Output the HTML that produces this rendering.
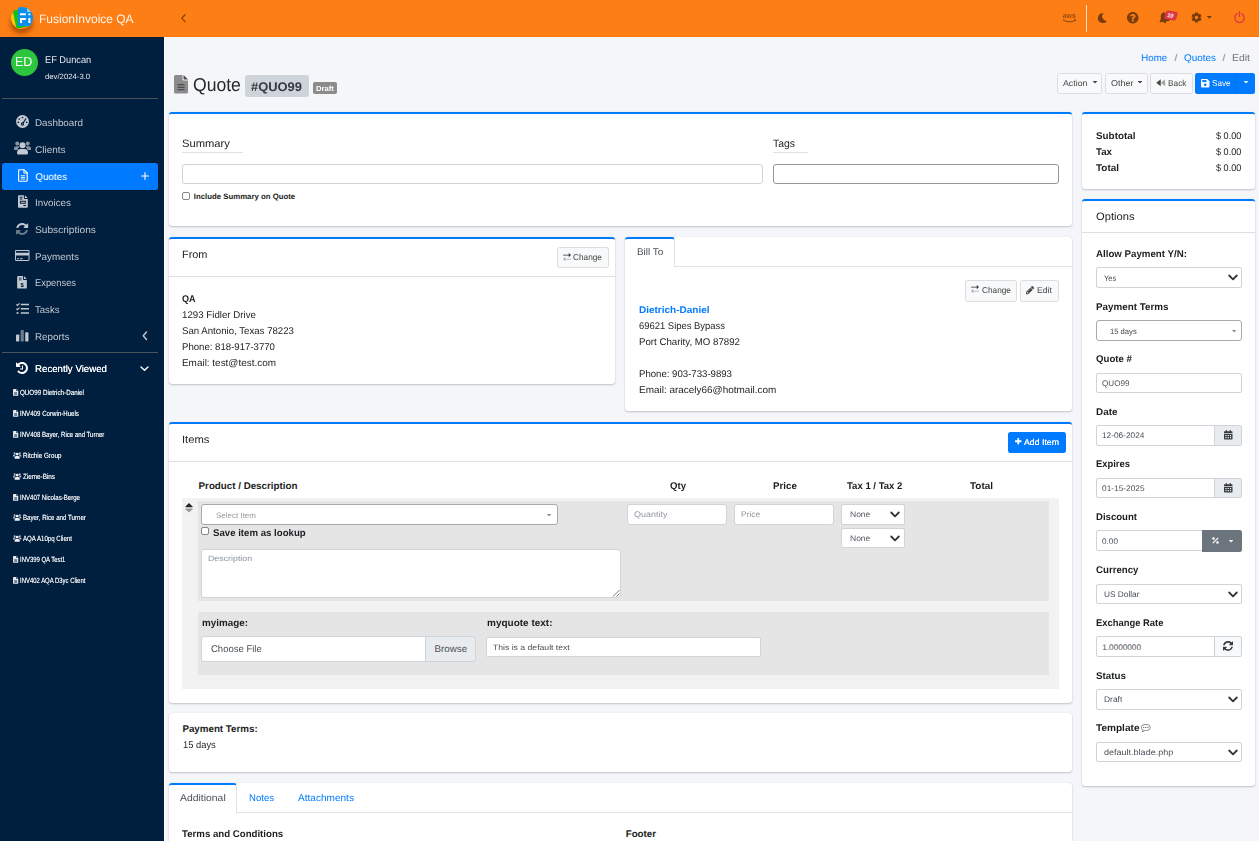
<!DOCTYPE html><html lang="en"><head><meta charset="utf-8"><title>FusionInvoice QA - Quote #QUO99</title><style>html,body{margin:0;padding:0}body{width:1259px;height:841px;overflow:hidden;position:relative;background:#f4f6f9;font-family:"Liberation Sans",sans-serif;text-rendering:geometricPrecision}
.a{position:absolute;box-sizing:border-box}.t{position:absolute;white-space:nowrap;line-height:1;transform-origin:0 50%}svg{display:block;overflow:visible}.w{position:absolute;left:0;top:0;width:0;height:0;margin:0;padding:0}</style></head><body>
<main class="w">
<div class="a" style="left:164px;top:37px;width:1095px;height:804px;background:#f4f6f9;"></div>
<div class="a" style="left:164px;top:37px;width:1px;height:804px;background:#fff;"></div>
<span class="t" style="left:1141.00px;top:54.031px;font-size:9.77px;color:#007bff;">Home</span>
<span class="t" style="left:1174.50px;top:54.031px;font-size:9.77px;color:#6c757d;">/</span>
<span class="t" style="left:1184.00px;top:54.031px;font-size:9.77px;color:#007bff;transform:scaleX(1.0156);">Quotes</span>
<span class="t" style="left:1222.50px;top:54.031px;font-size:9.77px;color:#6c757d;">/</span>
<span class="t" style="left:1232.00px;top:54.031px;font-size:9.77px;color:#6c757d;transform:scaleX(1.0680);">Edit</span>
<svg class="a" style="left:174.00px;top:74.50px;" width="14.00" height="18.50" viewBox="0 0 28 37"><path d="M3 0H17V8.5Q17 11 19.5 11H28V34Q28 37 25 37H3Q0 37 0 34V3Q0 0 3 0Z" fill="#8c8c8c"/><path d="M19 0L28 9H20.5Q19 9 19 7.5Z" fill="#4a4a4a"/><path d="M7 19.5h14M7 24.5h14M7 29.5h14" stroke="#3c3c3c" stroke-width="2.2"/></svg>
<span class="t" style="left:192.90px;top:76.034px;font-size:18.70px;color:#24282c;transform:scaleX(0.9400);">Quote</span>
<div class="a" style="left:245px;top:75px;width:64px;height:22px;background:#ced4da;border-radius:3px;"></div>
<span class="t" style="left:251.20px;top:81.026px;font-size:12.60px;color:#343a40;font-weight:700;transform:scaleX(1.0260);">#QUO99</span>
<div class="a" style="left:313px;top:82px;width:24px;height:12px;background:#8c8c8c;border-radius:2px;"></div>
<span class="t" style="left:315.70px;top:85.035px;font-size:7.44px;color:#fff;font-weight:700;transform:scaleX(1.0304);">Draft</span>
<div class="a" style="left:1057px;top:73px;width:45px;height:21px;background:#f8f9fa;border:1px solid #ddd;border-radius:2.5px;"></div>
<span class="t" style="left:1063.00px;top:79.024px;font-size:8.56px;color:#444;transform:scaleX(1.0296);">Action</span>
<svg class="a" style="left:1092.50px;top:81.00px;" width="4.00" height="2.40" viewBox="0 0 256 144" preserveAspectRatio="none"><path fill="#444" d="M256 16C256 7 249 0 240 0H16C7 0 0 7 0 16C0 20 2 24 5 27L117 139C120 142 124 144 128 144C132 144 136 142 139 139L251 27C254 24 256 20 256 16Z"/></svg>
<div class="a" style="left:1105px;top:73px;width:43px;height:21px;background:#f8f9fa;border:1px solid #ddd;border-radius:2.5px;"></div>
<span class="t" style="left:1111.00px;top:79.024px;font-size:8.56px;color:#444;transform:scaleX(1.0514);">Other</span>
<svg class="a" style="left:1138.00px;top:81.00px;" width="4.00" height="2.40" viewBox="0 0 256 144" preserveAspectRatio="none"><path fill="#444" d="M256 16C256 7 249 0 240 0H16C7 0 0 7 0 16C0 20 2 24 5 27L117 139C120 142 124 144 128 144C132 144 136 142 139 139L251 27C254 24 256 20 256 16Z"/></svg>
<div class="a" style="left:1150px;top:73px;width:43px;height:21px;background:#f8f9fa;border:1px solid #ddd;border-radius:2.5px;"></div>
<svg class="a" style="left:1156.00px;top:78.80px;" width="9.50" height="7.40" viewBox="0 0 19 15"><path d="M9.500 0.500V14.500L0.500 7.500Z" fill="#444"/><path d="M18.500 0.500V14.500L9.500 7.500Z" fill="#a5a5a5"/></svg>
<span class="t" style="left:1167.50px;top:79.024px;font-size:8.56px;color:#444;transform:scaleX(0.9692);">Back</span>
<div class="a" style="left:1195px;top:73px;width:60px;height:21px;background:#007bff;border-radius:2.5px;"></div>
<div class="a" style="left:1236px;top:73px;width:0.6px;height:21px;background:#0574f0;"></div>
<svg class="a" style="left:1201.00px;top:78.50px;" width="8.50" height="8.50" viewBox="0 0 17 17"><path d="M2 0H12.5L17 4.5V15Q17 17 15 17H2Q0 17 0 15V2Q0 0 2 0Z" fill="#fff"/><rect x="2.5" y="2.2" width="8.5" height="4" fill="#007bff"/><circle cx="8.5" cy="11.5" r="2.6" fill="#007bff"/></svg>
<span class="t" style="left:1212.00px;top:79.024px;font-size:8.56px;color:#fff;transform:scaleX(0.9479);">Save</span>
<svg class="a" style="left:1243.50px;top:81.00px;" width="4.00" height="2.40" viewBox="0 0 256 144" preserveAspectRatio="none"><path fill="#fff" d="M256 16C256 7 249 0 240 0H16C7 0 0 7 0 16C0 20 2 24 5 27L117 139C120 142 124 144 128 144C132 144 136 142 139 139L251 27C254 24 256 20 256 16Z"/></svg>
<div class="a" style="left:169px;top:112px;width:903px;height:114px;background:#fff;border-radius:3px;box-shadow:0 0 1px rgba(0,0,0,.125),0 1px 2px rgba(0,0,0,.2);border-top:2px solid #007bff;"></div>
<span class="t" style="left:182.00px;top:139.025px;font-size:10.70px;color:#1b1e21;transform:scaleX(1.0481);">Summary</span>
<div class="a" style="left:182px;top:152px;width:61px;height:1px;background:#dee2e6;"></div>
<div class="a" style="left:182px;top:164px;width:581px;height:20px;background:#fff;border:1px solid #ced4da;border-radius:3px;"></div>
<div class="a" style="left:182px;top:192px;width:8px;height:8px;background:#fff;border:1px solid #858585;border-radius:2px;"></div>
<span class="t" style="left:193.80px;top:193.034px;font-size:7.81px;color:#1b1e21;font-weight:700;">Include Summary on Quote</span>
<span class="t" style="left:773.00px;top:139.025px;font-size:10.70px;color:#1b1e21;transform:scaleX(0.9744);">Tags</span>
<div class="a" style="left:773px;top:152px;width:35px;height:1px;background:#dee2e6;"></div>
<div class="a" style="left:773px;top:164px;width:286px;height:20px;background:#fff;border:1px solid #959595;border-radius:3px;"></div>
<div class="a" style="left:1082px;top:112px;width:173px;height:77px;background:#fff;border-radius:3px;box-shadow:0 0 1px rgba(0,0,0,.125),0 1px 2px rgba(0,0,0,.2);border-top:2px solid #007bff;"></div>
<span class="t" style="left:1096.00px;top:132.031px;font-size:9.77px;color:#1b1e21;font-weight:700;transform:scaleX(1.0107);">Subtotal</span>
<span class="t" style="left:1216.20px;top:132.031px;font-size:9.77px;color:#1b1e21;transform:scaleX(0.9315);">$ 0.00</span>
<span class="t" style="left:1096.00px;top:148.031px;font-size:9.77px;color:#1b1e21;font-weight:700;transform:scaleX(0.9925);">Tax</span>
<span class="t" style="left:1216.20px;top:148.031px;font-size:9.77px;color:#1b1e21;transform:scaleX(0.9315);">$ 0.00</span>
<span class="t" style="left:1096.00px;top:164.031px;font-size:9.77px;color:#1b1e21;font-weight:700;transform:scaleX(1.0169);">Total</span>
<span class="t" style="left:1216.20px;top:164.031px;font-size:9.77px;color:#1b1e21;transform:scaleX(0.9315);">$ 0.00</span>
<div class="a" style="left:169px;top:237px;width:446px;height:147px;background:#fff;border-radius:3px;box-shadow:0 0 1px rgba(0,0,0,.125),0 1px 2px rgba(0,0,0,.2);border-top:2px solid #007bff;"></div>
<span class="t" style="left:182.00px;top:250.025px;font-size:10.70px;color:#1b1e21;transform:scaleX(1.0206);">From</span>
<div class="a" style="left:169px;top:276px;width:446px;height:1px;background:rgba(0,0,0,.125);"></div>
<div class="a" style="left:557px;top:247px;width:52px;height:21px;background:#f8f9fa;border:1px solid #ddd;border-radius:2.5px;"></div>
<svg class="a" style="left:563.00px;top:252.50px;" width="8.00" height="8.20" viewBox="0 0 16 16.400"><path d="M0 3.300H11.500V0L16 4.200L11.500 8.400V5.100H0Z" fill="#333"/><path d="M16 11.300H4.500V8L0 12.200L4.500 16.400V13.100H16Z" fill="#a9a9b8"/></svg>
<span class="t" style="left:573.00px;top:253.024px;font-size:8.56px;color:#444;transform:scaleX(0.9666);">Change</span>
<span class="t" style="left:182.20px;top:295.031px;font-size:9.77px;color:#1b1e21;font-weight:700;transform:scaleX(0.9280);">QA</span>
<span class="t" style="left:182.30px;top:311.031px;font-size:9.77px;color:#1b1e21;transform:scaleX(0.9946);">1293 Fidler Drive</span>
<span class="t" style="left:182.30px;top:327.031px;font-size:9.77px;color:#1b1e21;transform:scaleX(0.9882);">San Antonio, Texas 78223</span>
<span class="t" style="left:182.30px;top:343.031px;font-size:9.77px;color:#1b1e21;transform:scaleX(0.9839);">Phone: 818-917-3770</span>
<span class="t" style="left:182.30px;top:359.031px;font-size:9.77px;color:#1b1e21;transform:scaleX(1.0170);">Email: test@test.com</span>
<div class="a" style="left:625px;top:237px;width:447px;height:174px;background:#fff;border-radius:3px;box-shadow:0 0 1px rgba(0,0,0,.125),0 1px 2px rgba(0,0,0,.2);"></div>
<div class="a" style="left:625px;top:265.6px;width:447px;height:0.8px;background:#dee2e6;"></div>
<div class="a" style="left:625px;top:237px;width:49.5px;height:30px;background:#fff;border-top:2px solid #007bff;border-right:1px solid #dee2e6;border-radius:3px 3px 0 0;"></div>
<span class="t" style="left:636.50px;top:248.031px;font-size:9.77px;color:#495057;transform:scaleX(1.0158);">Bill To</span>
<div class="a" style="left:965px;top:280px;width:51.5px;height:22px;background:#f8f9fa;border:1px solid #ddd;border-radius:2.5px;"></div>
<svg class="a" style="left:971.00px;top:285.40px;" width="8.00" height="8.20" viewBox="0 0 16 16.400"><path d="M0 3.300H11.500V0L16 4.200L11.500 8.400V5.100H0Z" fill="#333"/><path d="M16 11.300H4.500V8L0 12.200L4.500 16.400V13.100H16Z" fill="#a9a9b8"/></svg>
<span class="t" style="left:981.50px;top:286.024px;font-size:8.56px;color:#444;transform:scaleX(0.9666);">Change</span>
<div class="a" style="left:1020px;top:280px;width:39px;height:22px;background:#f8f9fa;border:1px solid #ddd;border-radius:2.5px;"></div>
<svg class="a" style="left:1026.00px;top:285.60px;" width="8.20" height="8.20" viewBox="0 0 379 379" preserveAspectRatio="none"><path fill="#444" d="M91 347H64V315H32V288L55 265L114 324ZM222 115C222 116 221 118 220 119L84 254C83 256 82 256 80 256C77 256 74 254 74 251C74 249 75 248 76 246L212 111C213 110 214 109 216 109C219 109 222 112 222 115ZM208 67 0 275V379H104L312 171ZM379 91C379 82 375 74 370 68L311 10C305 4 296 0 288 0C280 0 271 4 266 10L224 51L328 155L370 113C375 108 379 99 379 91Z"/></svg>
<span class="t" style="left:1037.00px;top:286.024px;font-size:8.56px;color:#444;transform:scaleX(1.0158);">Edit</span>
<span class="t" style="left:639.20px;top:306.031px;font-size:9.77px;color:#007bff;font-weight:700;transform:scaleX(1.0228);">Dietrich-Daniel</span>
<span class="t" style="left:639.20px;top:322.031px;font-size:9.77px;color:#1b1e21;transform:scaleX(0.9657);">69621 Sipes Bypass</span>
<span class="t" style="left:639.20px;top:338.031px;font-size:9.77px;color:#1b1e21;transform:scaleX(0.9912);">Port Charity, MO 87892</span>
<span class="t" style="left:639.20px;top:370.031px;font-size:9.77px;color:#1b1e21;transform:scaleX(0.9839);">Phone: 903-733-9893</span>
<span class="t" style="left:639.20px;top:386.031px;font-size:9.77px;color:#1b1e21;transform:scaleX(1.0198);">Email: aracely66@hotmail.com</span>
<div class="a" style="left:169px;top:422px;width:903px;height:281px;background:#fff;border-radius:3px;box-shadow:0 0 1px rgba(0,0,0,.125),0 1px 2px rgba(0,0,0,.2);border-top:2px solid #007bff;"></div>
<span class="t" style="left:182.00px;top:435.025px;font-size:10.70px;color:#1b1e21;transform:scaleX(1.0512);">Items</span>
<div class="a" style="left:169px;top:461px;width:903px;height:1px;background:rgba(0,0,0,.125);"></div>
<div class="a" style="left:1008px;top:432px;width:58px;height:21px;background:#007bff;border-radius:2.5px;"></div>
<svg class="a" style="left:1014.80px;top:438.20px;" width="6.50" height="6.50" viewBox="0 0 352 352" preserveAspectRatio="none"><path fill="#fff" d="M352 152C352 139 341 128 328 128H224V24C224 11 213 0 200 0H152C139 0 128 11 128 24V128H24C11 128 0 139 0 152V200C0 213 11 224 24 224H128V328C128 341 139 352 152 352H200C213 352 224 341 224 328V224H328C341 224 352 213 352 200Z"/></svg>
<span class="t" style="left:1024.00px;top:438.024px;font-size:8.56px;color:#fff;transform:scaleX(1.0222);text-shadow:0 0 .4px #fff;">Add Item</span>
<span class="t" style="left:198.60px;top:482.031px;font-size:9.77px;color:#1b1e21;font-weight:700;">Product / Description</span>
<span class="t" style="left:669.50px;top:482.031px;font-size:9.77px;color:#1b1e21;font-weight:700;transform:scaleX(0.9836);">Qty</span>
<span class="t" style="left:773.00px;top:482.031px;font-size:9.77px;color:#1b1e21;font-weight:700;transform:scaleX(1.0047);">Price</span>
<span class="t" style="left:847.10px;top:482.031px;font-size:9.77px;color:#1b1e21;font-weight:700;transform:scaleX(0.9777);">Tax 1 / Tax 2</span>
<span class="t" style="left:969.90px;top:482.031px;font-size:9.77px;color:#1b1e21;font-weight:700;transform:scaleX(1.0169);">Total</span>
<div class="a" style="left:182px;top:498px;width:877px;height:191px;background:#f2f2f2;"></div>
<div class="a" style="left:198px;top:501px;width:851px;height:100px;background:#e5e5e5;"></div>
<div class="a" style="left:198px;top:612px;width:851px;height:63px;background:#e5e5e5;"></div>
<svg class="a" style="left:184.50px;top:503.00px;" width="8.00" height="9.60" viewBox="0 0 16 20"><path d="M8 0L15.4 7.2Q16 8.6 14.6 8.6H1.4Q0 8.6 .6 7.2Z" fill="#212529"/><path d="M8 20L15.4 12.8Q16 11.4 14.6 11.4H1.4Q0 11.4 .6 12.8Z" fill="#999"/></svg>
<div class="a" style="left:201px;top:504px;width:357px;height:21px;background:#fff;border:1px solid #aaa;border-radius:3px;"></div>
<span class="t" style="left:216.00px;top:512.034px;font-size:7.81px;color:#999;transform:scaleX(1.0243);">Select Item</span>
<svg class="a" style="left:547.20px;top:513.50px;" width="4.20" height="2.60" viewBox="0 0 10 6"><path d="M0 0H10L5 6Z" fill="#888"/></svg>
<div class="a" style="left:201.3px;top:527px;width:8px;height:8px;background:#fff;border:1px solid #858585;border-radius:2px;"></div>
<span class="t" style="left:212.70px;top:529.031px;font-size:9.77px;color:#1b1e21;font-weight:700;transform:scaleX(0.9868);">Save item as lookup</span>
<div class="a" style="left:201px;top:549px;width:420px;height:49px;background:#fff;border:1px solid #ced4da;border-radius:3px;"></div>
<span class="t" style="left:208.00px;top:555.034px;font-size:7.81px;color:#8a94a0;transform:scaleX(1.1319);">Description</span>
<svg class="a" style="left:611.50px;top:588.50px;" width="8.00" height="8.00" viewBox="0 0 8 8"><path d="M1 7.5L7.5 1M4.5 7.5L7.5 4.5" stroke="#555" stroke-width=".8" fill="none"/></svg>
<div class="a" style="left:627px;top:504px;width:100px;height:21px;background:#fff;border:1px solid #ced4da;border-radius:3px;"></div>
<span class="t" style="left:633.60px;top:511.033px;font-size:8.18px;color:#90979f;transform:scaleX(1.1027);">Quantity</span>
<div class="a" style="left:734px;top:504px;width:100px;height:21px;background:#fff;border:1px solid #ced4da;border-radius:3px;"></div>
<span class="t" style="left:740.70px;top:511.033px;font-size:8.18px;color:#90979f;transform:scaleX(1.0348);">Price</span>
<div class="a" style="left:841px;top:504px;width:64px;height:21px;background:#fff;border:1px solid #ced4da;border-radius:2px;"></div>
<span class="t" style="left:849.60px;top:511.033px;font-size:8.18px;color:#50565c;transform:scaleX(1.0384);">None</span>
<svg class="a" style="left:889.50px;top:511.20px;" width="10.00" height="7.00" viewBox="0 0 10 7"><path d="M1.2 1.5L5 5.3L8.8 1.5" stroke="#333" stroke-width="1.8" fill="none" stroke-linecap="round" stroke-linejoin="round"/></svg>
<div class="a" style="left:841px;top:528px;width:64px;height:20px;background:#fff;border:1px solid #ced4da;border-radius:2px;"></div>
<span class="t" style="left:849.60px;top:535.033px;font-size:8.18px;color:#50565c;transform:scaleX(1.0384);">None</span>
<svg class="a" style="left:889.50px;top:535.20px;" width="10.00" height="7.00" viewBox="0 0 10 7"><path d="M1.2 1.5L5 5.3L8.8 1.5" stroke="#333" stroke-width="1.8" fill="none" stroke-linecap="round" stroke-linejoin="round"/></svg>
<span class="t" style="left:201.80px;top:619.031px;font-size:9.77px;color:#1b1e21;font-weight:700;transform:scaleX(1.0082);">myimage:</span>
<div class="a" style="left:201px;top:636px;width:275px;height:26px;background:#fff;border:1px solid #ced4da;border-radius:3px;"></div>
<div class="a" style="left:425px;top:636px;width:51px;height:26px;background:#e9ecef;border:1px solid #ced4da;border-radius:0 3px 3px 0;"></div>
<span class="t" style="left:210.70px;top:645.031px;font-size:9.77px;color:#495057;transform:scaleX(0.9727);">Choose File</span>
<span class="t" style="left:434.60px;top:645.031px;font-size:9.77px;color:#495057;">Browse</span>
<span class="t" style="left:486.70px;top:619.031px;font-size:9.77px;color:#1b1e21;font-weight:700;transform:scaleX(1.0228);">myquote text:</span>
<div class="a" style="left:486px;top:637px;width:275px;height:20px;background:#fff;border:1px solid #ced4da;border-radius:2px;"></div>
<span class="t" style="left:493.10px;top:644.034px;font-size:7.81px;color:#495057;transform:scaleX(1.1070);">This is a default text</span>
<div class="a" style="left:169px;top:713px;width:903px;height:59px;background:#fff;border-radius:3px;box-shadow:0 0 1px rgba(0,0,0,.125),0 1px 2px rgba(0,0,0,.2);"></div>
<span class="t" style="left:182.40px;top:725.031px;font-size:9.77px;color:#1b1e21;font-weight:700;">Payment Terms:</span>
<span class="t" style="left:182.60px;top:741.031px;font-size:9.77px;color:#1b1e21;transform:scaleX(0.9578);">15 days</span>
<div class="a" style="left:169px;top:783px;width:903px;height:77px;background:#fff;border-radius:3px;box-shadow:0 0 1px rgba(0,0,0,.125),0 1px 2px rgba(0,0,0,.2);"></div>
<div class="a" style="left:169px;top:811.6px;width:903px;height:0.8px;background:#dee2e6;"></div>
<div class="a" style="left:169px;top:783px;width:68px;height:30px;background:#fff;border-top:2px solid #007bff;border-right:1px solid #dee2e6;border-radius:3px 3px 0 0;"></div>
<span class="t" style="left:179.60px;top:794.031px;font-size:9.77px;color:#495057;transform:scaleX(1.0655);">Additional</span>
<span class="t" style="left:249.40px;top:794.031px;font-size:9.77px;color:#007bff;transform:scaleX(0.9804);">Notes</span>
<span class="t" style="left:298.00px;top:794.031px;font-size:9.77px;color:#007bff;transform:scaleX(1.0309);">Attachments</span>
<span class="t" style="left:182.40px;top:830.031px;font-size:9.77px;color:#1b1e21;font-weight:700;transform:scaleX(0.9884);">Terms and Conditions</span>
<span class="t" style="left:625.70px;top:830.031px;font-size:9.77px;color:#1b1e21;font-weight:700;">Footer</span>
<section class="w">
<div class="a" style="left:1082px;top:199px;width:173px;height:587px;background:#fff;border-radius:3px;box-shadow:0 0 1px rgba(0,0,0,.125),0 1px 2px rgba(0,0,0,.2);border-top:2px solid #007bff;"></div>
<span class="t" style="left:1096.00px;top:212.025px;font-size:10.70px;color:#1b1e21;transform:scaleX(1.0445);">Options</span>
<div class="a" style="left:1082px;top:232px;width:173px;height:1px;background:rgba(0,0,0,.125);"></div>
<span class="t" style="left:1096.30px;top:250.031px;font-size:9.77px;color:#1b1e21;font-weight:700;transform:scaleX(0.9935);">Allow Payment Y/N:</span>
<span class="t" style="left:1096.30px;top:303.031px;font-size:9.77px;color:#1b1e21;font-weight:700;transform:scaleX(1.0062);">Payment Terms</span>
<span class="t" style="left:1096.30px;top:355.031px;font-size:9.77px;color:#1b1e21;font-weight:700;transform:scaleX(0.9892);">Quote #</span>
<span class="t" style="left:1096.30px;top:408.031px;font-size:9.77px;color:#1b1e21;font-weight:700;transform:scaleX(1.0141);">Date</span>
<span class="t" style="left:1096.30px;top:460.031px;font-size:9.77px;color:#1b1e21;font-weight:700;transform:scaleX(0.9627);">Expires</span>
<span class="t" style="left:1096.30px;top:513.031px;font-size:9.77px;color:#1b1e21;font-weight:700;transform:scaleX(0.9805);">Discount</span>
<span class="t" style="left:1096.30px;top:566.031px;font-size:9.77px;color:#1b1e21;font-weight:700;transform:scaleX(0.9909);">Currency</span>
<span class="t" style="left:1096.30px;top:619.031px;font-size:9.77px;color:#1b1e21;font-weight:700;transform:scaleX(0.9636);">Exchange Rate</span>
<span class="t" style="left:1096.30px;top:672.031px;font-size:9.77px;color:#1b1e21;font-weight:700;transform:scaleX(1.0051);">Status</span>
<span class="t" style="left:1096.30px;top:724.031px;font-size:9.77px;color:#1b1e21;font-weight:700;transform:scaleX(1.0318);">Template</span>
<div class="a" style="left:1096px;top:267px;width:146px;height:21px;background:#fff;border:1px solid #ced4da;border-radius:2px;"></div>
<span class="t" style="left:1104.20px;top:275.033px;font-size:8.18px;color:#495057;transform:scaleX(0.9075);">Yes</span>
<svg class="a" style="left:1227.50px;top:274.20px;" width="10.00" height="7.00" viewBox="0 0 10 7"><path d="M1.2 1.5L5 5.3L8.8 1.5" stroke="#333" stroke-width="1.8" fill="none" stroke-linecap="round" stroke-linejoin="round"/></svg>
<div class="a" style="left:1096px;top:320px;width:146px;height:21px;background:#fff;border:1px solid #aaa;border-radius:2px;border-radius:3px;"></div>
<span class="t" style="left:1110.30px;top:328.034px;font-size:7.81px;color:#444;transform:scaleX(0.9790);">15 days</span>
<svg class="a" style="left:1232.00px;top:329.50px;" width="4.20" height="2.60" viewBox="0 0 10 6"><path d="M0 0H10L5 6Z" fill="#888"/></svg>
<div class="a" style="left:1096px;top:373px;width:146px;height:20px;background:#fff;border:1px solid #ced4da;border-radius:2px;"></div>
<span class="t" style="left:1102.00px;top:380.033px;font-size:8.18px;color:#495057;transform:scaleX(0.9917);">QUO99</span>
<div class="a" style="left:1096px;top:425px;width:119px;height:21px;background:#fff;border:1px solid #ced4da;border-radius:2px;border-radius:2px 0 0 2px;"></div>
<div class="a" style="left:1214px;top:425px;width:28px;height:21px;background:#e9ecef;border:1px solid #ced4da;border-radius:0 2px 2px 0;"></div>
<svg class="a" style="left:1224.00px;top:430.30px;" width="8.50" height="9.50" viewBox="0 0 17 19"><path d="M1.5 2.5H15.5Q17 2.5 17 4V6.5H0V4Q0 2.5 1.5 2.5Z" fill="#343a40"/><rect x="3.5" y="0" width="2.4" height="4.5" rx="1" fill="#343a40"/><rect x="11.1" y="0" width="2.4" height="4.5" rx="1" fill="#343a40"/><path d="M0 8H17V17.5Q17 19 15.5 19H1.5Q0 19 0 17.5Z" fill="#343a40"/><g fill="#e9ecef"><rect x="2.6" y="10" width="2.6" height="2.4"/><rect x="7.2" y="10" width="2.6" height="2.4"/><rect x="11.8" y="10" width="2.6" height="2.4"/><rect x="2.6" y="14.2" width="2.6" height="2.4"/><rect x="7.2" y="14.2" width="2.6" height="2.4"/><rect x="11.8" y="14.2" width="2.6" height="2.4"/></g></svg>
<span class="t" style="left:1102.00px;top:432.033px;font-size:8.18px;color:#495057;transform:scaleX(1.0134);">12-06-2024</span>
<div class="a" style="left:1096px;top:478px;width:119px;height:20px;background:#fff;border:1px solid #ced4da;border-radius:2px;border-radius:2px 0 0 2px;"></div>
<div class="a" style="left:1214px;top:478px;width:28px;height:20px;background:#e9ecef;border:1px solid #ced4da;border-radius:0 2px 2px 0;"></div>
<svg class="a" style="left:1224.00px;top:483.20px;" width="8.50" height="9.50" viewBox="0 0 17 19"><path d="M1.5 2.5H15.5Q17 2.5 17 4V6.5H0V4Q0 2.5 1.5 2.5Z" fill="#343a40"/><rect x="3.5" y="0" width="2.4" height="4.5" rx="1" fill="#343a40"/><rect x="11.1" y="0" width="2.4" height="4.5" rx="1" fill="#343a40"/><path d="M0 8H17V17.5Q17 19 15.5 19H1.5Q0 19 0 17.5Z" fill="#343a40"/><g fill="#e9ecef"><rect x="2.6" y="10" width="2.6" height="2.4"/><rect x="7.2" y="10" width="2.6" height="2.4"/><rect x="11.8" y="10" width="2.6" height="2.4"/><rect x="2.6" y="14.2" width="2.6" height="2.4"/><rect x="7.2" y="14.2" width="2.6" height="2.4"/><rect x="11.8" y="14.2" width="2.6" height="2.4"/></g></svg>
<span class="t" style="left:1102.00px;top:485.033px;font-size:8.18px;color:#495057;transform:scaleX(1.0181);">01-15-2025</span>
<div class="a" style="left:1096px;top:530px;width:107px;height:21px;background:#fff;border:1px solid #ced4da;border-radius:2px;border-radius:2px 0 0 2px;"></div>
<div class="a" style="left:1202px;top:530px;width:40px;height:22px;background:#6c757d;border-radius:0 2.5px 2.5px 0;"></div>
<svg class="a" style="left:1211.50px;top:536.80px;" width="7.00" height="7.00" viewBox="0 0 14 14"><path d="M11.5 .8L13.2 2.5L2.5 13.2L.8 11.5Z" fill="#fff"/><circle cx="3" cy="3" r="2.6" fill="#fff"/><circle cx="11" cy="11" r="2.6" fill="#fff"/></svg>
<svg class="a" style="left:1228.50px;top:540.00px;" width="4.00" height="2.40" viewBox="0 0 256 144" preserveAspectRatio="none"><path fill="#fff" d="M256 16C256 7 249 0 240 0H16C7 0 0 7 0 16C0 20 2 24 5 27L117 139C120 142 124 144 128 144C132 144 136 142 139 139L251 27C254 24 256 20 256 16Z"/></svg>
<span class="t" style="left:1102.00px;top:538.033px;font-size:8.18px;color:#495057;transform:scaleX(1.0057);">0.00</span>
<div class="a" style="left:1096px;top:584px;width:146px;height:20px;background:#fff;border:1px solid #ced4da;border-radius:2px;"></div>
<span class="t" style="left:1104.20px;top:591.033px;font-size:8.18px;color:#495057;transform:scaleX(1.0140);">US Dollar</span>
<svg class="a" style="left:1227.50px;top:591.20px;" width="10.00" height="7.00" viewBox="0 0 10 7"><path d="M1.2 1.5L5 5.3L8.8 1.5" stroke="#333" stroke-width="1.8" fill="none" stroke-linecap="round" stroke-linejoin="round"/></svg>
<div class="a" style="left:1096px;top:636px;width:118.5px;height:21px;background:#fff;border:1px solid #ced4da;border-radius:2px;border-radius:2px 0 0 2px;"></div>
<div class="a" style="left:1214px;top:636px;width:28px;height:21px;background:#f8f9fa;border:1px solid #ced4da;border-radius:0 2px 2px 0;"></div>
<svg class="a" style="left:1223.00px;top:641.20px;" width="10.00" height="10.00" viewBox="0 0 384 384" preserveAspectRatio="none"><path fill="#343a40" d="M378 232C378 228 374 224 370 224H322C318 224 316 226 314 230C310 240 307 249 301 259C278 297 236 320 192 320C160 320 128 308 105 286L139 251C142 248 144 244 144 240C144 231 137 224 128 224H16C7 224 0 231 0 240V352C0 361 7 368 16 368C20 368 24 366 27 363L60 331C95 365 142 384 191 384C283 384 356 322 378 234C378 233 378 232 378 232ZM384 32C384 23 377 16 368 16C364 16 360 18 357 21L324 53C289 20 241 0 192 0C100 0 26 62 4 150C4 151 4 152 4 152C4 156 8 160 12 160H62C66 160 68 158 70 154C74 144 77 135 83 125C106 87 148 64 192 64C224 64 256 76 279 98L245 133C242 136 240 140 240 144C240 153 247 160 256 160H368C377 160 384 153 384 144Z"/></svg>
<span class="t" style="left:1102.30px;top:644.033px;font-size:8.18px;color:#495057;">1.0000000</span>
<div class="a" style="left:1096px;top:689px;width:146px;height:21px;background:#fff;border:1px solid #ced4da;border-radius:2px;"></div>
<span class="t" style="left:1104.20px;top:696.033px;font-size:8.18px;color:#495057;transform:scaleX(1.0333);">Draft</span>
<svg class="a" style="left:1227.50px;top:696.20px;" width="10.00" height="7.00" viewBox="0 0 10 7"><path d="M1.2 1.5L5 5.3L8.8 1.5" stroke="#333" stroke-width="1.8" fill="none" stroke-linecap="round" stroke-linejoin="round"/></svg>
<svg class="a" style="left:1141.40px;top:723.80px;" width="9.60" height="8.20" viewBox="0 0 448 384" preserveAspectRatio="none"><path fill="#6a6f75" d="M160 160C160 142 146 128 128 128C110 128 96 142 96 160C96 178 110 192 128 192C146 192 160 178 160 160ZM256 160C256 142 242 128 224 128C206 128 192 142 192 160C192 178 206 192 224 192C242 192 256 178 256 160ZM352 160C352 142 338 128 320 128C302 128 288 142 288 160C288 178 302 192 320 192C338 192 352 178 352 160ZM224 32C328 32 416 90 416 160C416 230 328 288 224 288C213 288 202 287 192 286L177 284L166 294C146 312 123 326 98 337C104 325 110 312 115 294L122 270L100 257C57 233 32 197 32 160C32 90 120 32 224 32ZM448 160C448 72 348 0 224 0C100 0 0 72 0 160C0 211 33 256 84 285C73 327 55 342 39 360C35 364 31 368 32 374C32 374 32 374 32 374C34 380 38 384 43 384C43 384 44 384 44 384C54 383 64 381 73 378C116 368 155 347 188 318C200 319 212 320 224 320C348 320 448 248 448 160Z"/></svg>
<div class="a" style="left:1096px;top:742px;width:146px;height:20px;background:#fff;border:1px solid #ced4da;border-radius:2px;"></div>
<span class="t" style="left:1104.20px;top:749.033px;font-size:8.18px;color:#495057;transform:scaleX(1.1038);">default.blade.php</span>
<svg class="a" style="left:1227.50px;top:749.20px;" width="10.00" height="7.00" viewBox="0 0 10 7"><path d="M1.2 1.5L5 5.3L8.8 1.5" stroke="#333" stroke-width="1.8" fill="none" stroke-linecap="round" stroke-linejoin="round"/></svg>
</section></main>
<header class="w">
<div class="a" style="left:0px;top:0px;width:1259px;height:37px;background:#fd7e14;"></div>
<div class="a" style="left:164px;top:36px;width:1095px;height:1px;background:#fb7a0c;"></div>
<svg class="a" style="left:0.00px;top:0.00px;" width="50.00" height="37.00" viewBox="0 0 50 37"><defs><clipPath id="lc"><circle cx="22" cy="18" r="11"/></clipPath><filter id="ls" x="-60%" y="-60%" width="220%" height="220%"><feGaussianBlur stdDeviation="2.6"/></filter></defs>
<ellipse cx="21.5" cy="23.5" rx="11" ry="10" fill="#7a3300" opacity=".62" filter="url(#ls)"/>
<g clip-path="url(#lc)"><rect x="10" y="6" width="24" height="24" fill="#fd8318"/>
<rect x="12" y="11.5" width="15" height="17" rx="1.5" fill="#ffc40c" transform="rotate(-24 19 21)"/>
<rect x="14.6" y="9" width="15" height="18.5" rx="1.5" fill="#10c020" transform="rotate(-11 22 19)"/>
<path d="M18 8.5Q18 7 19.5 7H34V26H19.5Q18 26 18 24.5Z" fill="#0d8eea"/>
<path d="M27 7.5L31.5 12H27Z" fill="#7fd4ff"/></g>
<path d="M20 13.2h5.8v2H20zM20 18h5.8v1.9H22v3H20zM28.4 13.6h2v1.7h-2zM28.4 18h2v4.9h-2z" fill="#fff"/></svg>
<span class="t" style="left:38.80px;top:13.022px;font-size:12.18px;color:#fff;transform:scaleX(0.9848);opacity:.93;">FusionInvoice QA</span>
<svg class="a" style="left:180.80px;top:14.00px;" width="4.80" height="8.30" viewBox="0 0 146 250" preserveAspectRatio="none"><path fill="#7c3c08" d="M146 21C146 18 144 16 143 15L130 2C129 1 127 0 125 0C123 0 120 1 119 2L2 119C1 120 0 123 0 125C0 127 1 129 2 130L119 247C120 248 123 250 125 250C127 250 129 248 130 247L143 234C144 233 146 231 146 229C146 227 144 224 143 223L45 125L143 26C144 25 146 23 146 21Z"/></svg>
<svg class="a" style="left:1061.50px;top:12.50px;" width="15.00" height="10.00" viewBox="0 0 30 20"><text x="14.5" y="10" text-anchor="middle" font-family="Liberation Sans, sans-serif" font-weight="700" font-size="14.5" fill="#7a3c0a" opacity=".8" textLength="26" lengthAdjust="spacingAndGlyphs">aws</text><path d="M1.5 13.5Q14 21 26 15" stroke="#7a3c0a" stroke-width="1.8" fill="none"/><path d="M24 12.6l4.4 .6-1.6 3.8z" fill="#7a3c0a"/></svg>
<div class="a" style="left:1086px;top:5px;width:1px;height:27px;background:rgba(255,255,255,.75);"></div>
<svg class="a" style="left:1097.00px;top:13.00px;" width="10.00" height="10.00" viewBox="0 0 20 20"><path d="M13 0.600A9.700 9.700 0 1 0 19.500 15.800A9 9 0 0 1 13 0.600Z" fill="#7a3c0a"/></svg>
<svg class="a" style="left:1126.50px;top:12.30px;" width="11.50" height="11.50" viewBox="0 0 384 384" preserveAspectRatio="none"><path fill="#7a3c0a" d="M224 312C224 316 220 320 216 320H168C164 320 160 316 160 312V264C160 260 164 256 168 256H216C220 256 224 260 224 264V312ZM288 144C288 182 262 196 243 207C231 214 224 226 224 232C224 236 220 240 216 240H168C164 240 160 236 160 232V223C160 199 184 178 202 170C217 163 224 156 224 144C224 132 209 122 193 122C184 122 176 125 172 128C167 132 162 136 150 151C149 153 146 154 144 154C142 154 140 154 139 153L106 128C103 125 102 121 104 117C126 82 156 64 197 64C240 64 288 98 288 144ZM384 192C384 86 298 0 192 0C86 0 0 86 0 192C0 298 86 384 192 384C298 384 384 298 384 192Z"/></svg>
<svg class="a" style="left:1158.70px;top:12.30px;transform:rotate(-8deg);" width="10.50" height="11.20" viewBox="0 0 416 448" preserveAspectRatio="none"><path fill="#7a3c0a" d="M212 424C212 426 210 428 208 428C184 428 164 408 164 384C164 382 166 380 168 380C170 380 172 382 172 384C172 404 188 420 208 420C210 420 212 422 212 424ZM416 352C379 321 336 265 336 144C336 96 296 44 230 34C231 31 232 28 232 24C232 11 221 0 208 0C195 0 184 11 184 24C184 28 185 31 186 34C120 44 80 96 80 144C80 265 37 321 0 352C0 370 14 384 32 384H144C144 419 173 448 208 448C243 448 272 419 272 384H384C402 384 416 370 416 352Z"/></svg>
<div class="a" style="left:1164.8px;top:10.6px;width:11.8px;height:9.2px;background:#dc3545;border-radius:2px;transform:rotate(10deg) skewX(-8deg);"></div>
<span class="t" style="left:1167.30px;top:13.021px;font-size:6.04px;color:#fff;font-weight:700;transform:rotate(10deg) skewX(-8deg) scaleX(.9);">10</span>
<svg class="a" style="left:1190.50px;top:12.10px;" width="11.00" height="11.00" viewBox="-10.500 -10.500 21 21"><path fill-rule="evenodd" fill="#7a3c0a" d="M-3.02 -6.76L-2.96 -9.55L2.96 -9.55L3.02 -6.76L4.34 -5.99L6.80 -7.34L9.75 -2.22L7.36 -0.77L7.36 0.77L9.75 2.22L6.80 7.34L4.34 5.99L3.02 6.76L2.96 9.55L-2.96 9.55L-3.02 6.76L-4.34 5.99L-6.80 7.34L-9.75 2.22L-7.36 0.77L-7.36 -0.77L-9.75 -2.22L-6.80 -7.34L-4.34 -5.99ZM3.30 0A3.30 3.30 0 1 0 -3.30 0A3.30 3.30 0 1 0 3.30 0Z"/></svg>
<svg class="a" style="left:1207.30px;top:16.30px;" width="4.60" height="2.70" viewBox="0 0 256 144" preserveAspectRatio="none"><path fill="#7a3c0a" d="M256 16C256 7 249 0 240 0H16C7 0 0 7 0 16C0 20 2 24 5 27L117 139C120 142 124 144 128 144C132 144 136 142 139 139L251 27C254 24 256 20 256 16Z"/></svg>
<svg class="a" style="left:1233.50px;top:11.30px;" width="11.00" height="12.00" viewBox="0 0 22 24"><path d="M6.2 5.6A9.4 9.4 0 1 0 15.8 5.6" stroke="#dc3545" stroke-width="2.6" fill="none" stroke-linecap="round"/><path d="M11 1.2V11" stroke="#dc3545" stroke-width="2.6" stroke-linecap="round"/></svg>
</header>
<aside class="w"><nav class="w">
<div class="a" style="left:0px;top:37px;width:164px;height:804px;background:#001f3f;"></div>
<div class="a" style="left:10.7px;top:48.7px;width:27.3px;height:27.3px;background:#2dc43e;border-radius:50%;"></div>
<span class="t" style="left:15.40px;top:56.022px;font-size:12.90px;color:#fff;transform:scaleX(0.9704);">ED</span>
<span class="t" style="left:44.80px;top:56.031px;font-size:9.77px;color:#e4e7eb;transform:scaleX(0.9448);">EF Duncan</span>
<span class="t" style="left:44.80px;top:73.030px;font-size:7.63px;color:#e0e3e8;transform:scaleX(1.0144);">dev/2024-3.0</span>
<div class="a" style="left:2px;top:98px;width:156px;height:1px;background:#4b545c;"></div>
<div class="a" style="left:2px;top:163px;width:156px;height:27px;background:#007bff;border-radius:2.5px;box-shadow:0 1px 2px rgba(0,0,0,.2);"></div>
<span class="t" style="left:35.30px;top:119.031px;font-size:9.77px;color:#c2c7d0;transform:scaleX(1.0047);">Dashboard</span>
<span class="t" style="left:35.30px;top:146.031px;font-size:9.77px;color:#c2c7d0;transform:scaleX(1.0219);">Clients</span>
<span class="t" style="left:35.30px;top:173.031px;font-size:9.77px;color:#fff;">Quotes</span>
<span class="t" style="left:35.30px;top:199.031px;font-size:9.77px;color:#c2c7d0;transform:scaleX(1.0040);">Invoices</span>
<span class="t" style="left:35.30px;top:226.031px;font-size:9.77px;color:#c2c7d0;transform:scaleX(1.0397);">Subscriptions</span>
<span class="t" style="left:35.30px;top:253.031px;font-size:9.77px;color:#c2c7d0;transform:scaleX(1.0132);">Payments</span>
<span class="t" style="left:35.30px;top:279.031px;font-size:9.77px;color:#c2c7d0;transform:scaleX(0.9559);">Expenses</span>
<span class="t" style="left:35.30px;top:306.031px;font-size:9.77px;color:#c2c7d0;transform:scaleX(0.9815);">Tasks</span>
<span class="t" style="left:35.30px;top:333.031px;font-size:9.77px;color:#c2c7d0;transform:scaleX(1.0089);">Reports</span>
<svg class="a" style="left:16.00px;top:114.80px;" width="13.00" height="13.00" viewBox="0 0 26 26"><circle cx="13" cy="13" r="13" fill="#c2c7d0"/><g fill="#001f3f"><circle cx="13" cy="5" r="1.7"/><circle cx="6.6" cy="8" r="1.7"/><circle cx="4.6" cy="14.5" r="1.7"/><circle cx="21.4" cy="14.5" r="1.7"/><circle cx="13" cy="18" r="3.3"/></g><path d="M13 18L19.6 7.6" stroke="#001f3f" stroke-width="2.4" stroke-linecap="round"/><circle cx="13" cy="18" r="1.2" fill="#c2c7d0"/></svg>
<svg class="a" style="left:14.00px;top:141.40px;" width="17.00" height="13.60" viewBox="0 0 34 27"><g fill="#8a94a3"><circle cx="6.5" cy="5" r="4"/><circle cx="27.5" cy="5" r="4"/><path d="M0 16Q0 10.5 5 10.5H8.5Q10.5 10.5 11.5 11.5Q7 14 7 18H0Z"/><path d="M34 16Q34 10.5 29 10.5H25.500Q23.500 10.5 22.500 11.5Q27 14 27 18H34Z"/></g><g fill="#c2c7d0"><circle cx="17" cy="8.5" r="6"/><path d="M6 24Q6 16 13 16H21Q28 16 28 24Q28 27 25.500 27H8.500Q6 27 6 24Z"/></g></svg>
<svg class="a" style="left:17.70px;top:169.00px;" width="9.80" height="13.00" viewBox="0 0 20 26"><path d="M3 1.200H12.500L18.800 7.500V23Q18.800 24.800 17 24.800H3Q1.200 24.800 1.200 23V3Q1.200 1.200 3 1.200Z" fill="none" stroke="#fff" stroke-width="2.400"/><path d="M12 1.500V8H18.500" fill="none" stroke="#fff" stroke-width="2"/><path d="M5.500 13.500H14.500M5.500 17H14.500M5.500 20.300H14.500" stroke="#fff" stroke-width="1.800"/></svg>
<svg class="a" style="left:17.70px;top:195.30px;" width="9.80" height="13.00" viewBox="0 0 20 26"><path d="M2.5 0H12V6Q12 8 14 8H20V23.5Q20 26 17.5 26H2.5Q0 26 0 23.5V2.5Q0 0 2.5 0ZM14 0L20 6H14.8Q14 6 14 5.2ZM3.500 3.500V5.200H9V3.500ZM3.500 7V8.700H9V7ZM4 11.500V17.500H16V11.500ZM6 13.300H14V15.700H6ZM11 20.300V22H16.500V20.300Z" fill-rule="evenodd" fill="#c2c7d0"/></svg>
<svg class="a" style="left:16.30px;top:222.50px;" width="12.30" height="12.00" viewBox="0 0 384 384"><path d="M378 232C378 228 374 224 370 224H322C318 224 316 226 314 230C310 240 307 249 301 259C278 297 236 320 192 320C160 320 128 308 105 286L139 251C142 248 144 244 144 240C144 231 137 224 128 224H16C7 224 0 231 0 240V352C0 361 7 368 16 368C20 368 24 366 27 363L60 331C95 365 142 384 191 384C283 384 356 322 378 234C378 233 378 232 378 232ZM384 32C384 23 377 16 368 16C364 16 360 18 357 21L324 53C289 20 241 0 192 0C100 0 26 62 4 150C4 151 4 152 4 152C4 156 8 160 12 160H62C66 160 68 158 70 154C74 144 77 135 83 125C106 87 148 64 192 64C224 64 256 76 279 98L245 133C242 136 240 140 240 144C240 153 247 160 256 160H368C377 160 384 153 384 144Z" fill="#c2c7d0"/><rect x="0" y="200" width="384" height="184" fill="#001f3f" opacity=".45"/></svg>
<svg class="a" style="left:15.00px;top:250.40px;" width="14.50" height="11.00" viewBox="0 0 480 384" preserveAspectRatio="none"><path fill="#c2c7d0" d="M440 0H40C18 0 0 18 0 40V344C0 366 18 384 40 384H440C462 384 480 366 480 344V40C480 18 462 0 440 0ZM40 32H440C444 32 448 36 448 40V96H32V40C32 36 36 32 40 32ZM440 352H40C36 352 32 348 32 344V192H448V344C448 348 444 352 440 352ZM64 320H128V288H64ZM160 320H256V288H160Z"/></svg>
<svg class="a" style="left:17.30px;top:275.60px;" width="10.00" height="12.60" viewBox="0 0 20 26"><path d="M2.5 0H12V6Q12 8 14 8H20V23.5Q20 26 17.5 26H2.5Q0 26 0 23.5V2.5Q0 0 2.5 0ZM14 0L20 6H14.8Q14 6 14 5.2ZM3.500 3.500V5.200H9V3.500ZM3.500 7V8.700H9V7Z" fill-rule="evenodd" fill="#c2c7d0"/><text x="10" y="22" text-anchor="middle" font-family="Liberation Sans, sans-serif" font-weight="700" font-size="12" fill="#001f3f">$</text></svg>
<svg class="a" style="left:16.00px;top:302.50px;" width="13.00" height="11.50" viewBox="0 0 26 23"><g fill="#c2c7d0"><rect x="9.5" y="1.5" width="16.5" height="3"/><rect x="9.5" y="10" width="16.5" height="3"/><rect x="9.5" y="18.500" width="16.500" height="3"/><circle cx="3" cy="20" r="2.2"/></g><g stroke="#c2c7d0" stroke-width="2.2" fill="none"><path d="M.8 3l2 2L7 .8"/><path d="M.8 11.500l2 2 4.200-4.200"/></g></svg>
<svg class="a" style="left:16.00px;top:329.70px;" width="12.50" height="11.50" viewBox="0 0 25 23"><g fill="#c2c7d0"><rect x="0" y="9" width="6.500" height="14" rx="1.500"/><rect x="9.200" y="0" width="6.500" height="23" rx="1.500" opacity=".55"/><rect x="18.400" y="4.500" width="6.500" height="18.500" rx="1.500"/></g></svg>
<svg class="a" style="left:141.00px;top:172.00px;" width="8.00" height="8.00" viewBox="0 0 16 16"><path d="M8 1V15M1 8H15" stroke="#fff" stroke-width="2.2" stroke-linecap="round"/></svg>
<svg class="a" style="left:141.50px;top:331.00px;" width="5.50" height="9.60" viewBox="0 0 11 19"><path d="M9 2L2.500 9.500L9 17" stroke="#c2c7d0" stroke-width="2.800" fill="none" stroke-linecap="round" stroke-linejoin="round"/></svg>
<div class="a" style="left:2px;top:352px;width:156px;height:1px;background:#4b545c;"></div>
<svg class="a" style="left:16.00px;top:361.70px;" width="12.00" height="12.00" viewBox="0 0 384 384" preserveAspectRatio="none"><path fill="#fff" d="M384 192C384 86 298 0 192 0C143 0 95 20 60 53L27 21C23 16 16 15 10 17C4 20 0 26 0 32V144C0 153 7 160 16 160H128C134 160 140 156 143 150C145 144 144 137 139 133L105 98C128 76 159 64 192 64C262 64 320 122 320 192C320 262 262 320 192 320C152 320 116 302 91 270C90 268 88 268 85 267C83 267 81 268 79 270L45 304C42 307 42 312 44 315C81 359 135 384 192 384C298 384 384 298 384 192ZM224 120C224 116 220 112 216 112H200C196 112 192 116 192 120V208H136C132 208 128 212 128 216V232C128 236 132 240 136 240H216C220 240 224 236 224 232Z"/></svg>
<span class="t" style="left:35.30px;top:365.031px;font-size:9.77px;color:#fff;transform:scaleX(0.9919);text-shadow:0 0 .5px #fff;">Recently Viewed</span>
<svg class="a" style="left:139.50px;top:366.30px;" width="9.00" height="5.50" viewBox="0 0 18 11"><path d="M2 2L9 8.500L16 2" stroke="#fff" stroke-width="2.800" fill="none" stroke-linecap="round" stroke-linejoin="round"/></svg>
<svg class="a" style="left:12.80px;top:389.00px;" width="5.30" height="6.80" viewBox="0 0 20 26"><path d="M2.5 0H12V6Q12 8 14 8H20V23.5Q20 26 17.5 26H2.5Q0 26 0 23.5V2.5Q0 0 2.500 0ZM14 0L20 6H14.800Q14 6 14 5.200ZM4.500 12.200V14H15.500V12.200ZM4.500 16.200V18H15.500V16.200ZM4.500 20.200V22H15.500V20.200Z" fill-rule="evenodd" fill="#e8eaee"/></svg>
<span class="t" style="left:20.00px;top:389.021px;font-size:7.53px;color:#e6e9ed;transform:scaleX(0.8312);text-shadow:0 0 .3px #e6e9ed;">QUO99 Dietrich-Daniel</span>
<svg class="a" style="left:12.80px;top:410.00px;" width="5.30" height="6.80" viewBox="0 0 20 26"><path d="M2.5 0H12V6Q12 8 14 8H20V23.5Q20 26 17.5 26H2.5Q0 26 0 23.5V2.5Q0 0 2.500 0ZM14 0L20 6H14.800Q14 6 14 5.200ZM4.500 12.200V14H15.500V12.200ZM4.500 16.200V18H15.500V16.200ZM4.500 20.200V22H15.500V20.200Z" fill-rule="evenodd" fill="#e8eaee"/></svg>
<span class="t" style="left:20.00px;top:410.021px;font-size:7.53px;color:#e6e9ed;transform:scaleX(0.8149);text-shadow:0 0 .3px #e6e9ed;">INV409 Corwin-Huels</span>
<svg class="a" style="left:12.80px;top:431.00px;" width="5.30" height="6.80" viewBox="0 0 20 26"><path d="M2.5 0H12V6Q12 8 14 8H20V23.5Q20 26 17.5 26H2.5Q0 26 0 23.5V2.5Q0 0 2.500 0ZM14 0L20 6H14.800Q14 6 14 5.200ZM4.500 12.200V14H15.500V12.200ZM4.500 16.200V18H15.500V16.200ZM4.500 20.200V22H15.500V20.200Z" fill-rule="evenodd" fill="#e8eaee"/></svg>
<span class="t" style="left:20.00px;top:431.021px;font-size:7.53px;color:#e6e9ed;transform:scaleX(0.8108);text-shadow:0 0 .3px #e6e9ed;">INV408 Bayer, Rice and Turner</span>
<svg class="a" style="left:13.00px;top:452.00px;" width="8.40" height="6.70" viewBox="0 0 34 27"><g fill="#b8c0cc"><circle cx="6.5" cy="5" r="4"/><circle cx="27.5" cy="5" r="4"/><path d="M0 16Q0 10.5 5 10.5H8.5Q10.5 10.5 11.5 11.5Q7 14 7 18H0Z"/><path d="M34 16Q34 10.5 29 10.5H25.500Q23.500 10.5 22.500 11.5Q27 14 27 18H34Z"/></g><g fill="#f0f2f5"><circle cx="17" cy="8.5" r="6"/><path d="M6 24Q6 16 13 16H21Q28 16 28 24Q28 27 25.500 27H8.500Q6 27 6 24Z"/></g></svg>
<span class="t" style="left:23.20px;top:452.021px;font-size:7.53px;color:#e6e9ed;transform:scaleX(0.8361);text-shadow:0 0 .3px #e6e9ed;">Ritchie Group</span>
<svg class="a" style="left:13.00px;top:473.00px;" width="8.40" height="6.70" viewBox="0 0 34 27"><g fill="#b8c0cc"><circle cx="6.5" cy="5" r="4"/><circle cx="27.5" cy="5" r="4"/><path d="M0 16Q0 10.5 5 10.5H8.5Q10.5 10.5 11.5 11.5Q7 14 7 18H0Z"/><path d="M34 16Q34 10.5 29 10.5H25.500Q23.500 10.5 22.500 11.5Q27 14 27 18H34Z"/></g><g fill="#f0f2f5"><circle cx="17" cy="8.5" r="6"/><path d="M6 24Q6 16 13 16H21Q28 16 28 24Q28 27 25.500 27H8.500Q6 27 6 24Z"/></g></svg>
<span class="t" style="left:23.20px;top:473.021px;font-size:7.53px;color:#e6e9ed;transform:scaleX(0.8407);text-shadow:0 0 .3px #e6e9ed;">Zieme-Bins</span>
<svg class="a" style="left:12.80px;top:494.00px;" width="5.30" height="6.80" viewBox="0 0 20 26"><path d="M2.5 0H12V6Q12 8 14 8H20V23.5Q20 26 17.5 26H2.5Q0 26 0 23.5V2.5Q0 0 2.500 0ZM14 0L20 6H14.800Q14 6 14 5.200ZM4.500 12.200V14H15.500V12.200ZM4.500 16.200V18H15.500V16.200ZM4.500 20.200V22H15.500V20.200Z" fill-rule="evenodd" fill="#e8eaee"/></svg>
<span class="t" style="left:20.00px;top:494.021px;font-size:7.53px;color:#e6e9ed;transform:scaleX(0.8053);text-shadow:0 0 .3px #e6e9ed;">INV407 Nicolas-Berge</span>
<svg class="a" style="left:13.00px;top:514.00px;" width="8.40" height="6.70" viewBox="0 0 34 27"><g fill="#b8c0cc"><circle cx="6.5" cy="5" r="4"/><circle cx="27.5" cy="5" r="4"/><path d="M0 16Q0 10.5 5 10.5H8.5Q10.5 10.5 11.5 11.5Q7 14 7 18H0Z"/><path d="M34 16Q34 10.5 29 10.5H25.500Q23.500 10.5 22.500 11.5Q27 14 27 18H34Z"/></g><g fill="#f0f2f5"><circle cx="17" cy="8.5" r="6"/><path d="M6 24Q6 16 13 16H21Q28 16 28 24Q28 27 25.500 27H8.500Q6 27 6 24Z"/></g></svg>
<span class="t" style="left:23.20px;top:514.021px;font-size:7.53px;color:#e6e9ed;transform:scaleX(0.8178);text-shadow:0 0 .3px #e6e9ed;">Bayer, Rice and Turner</span>
<svg class="a" style="left:13.00px;top:535.00px;" width="8.40" height="6.70" viewBox="0 0 34 27"><g fill="#b8c0cc"><circle cx="6.5" cy="5" r="4"/><circle cx="27.5" cy="5" r="4"/><path d="M0 16Q0 10.5 5 10.5H8.5Q10.5 10.5 11.5 11.5Q7 14 7 18H0Z"/><path d="M34 16Q34 10.5 29 10.5H25.500Q23.500 10.5 22.500 11.5Q27 14 27 18H34Z"/></g><g fill="#f0f2f5"><circle cx="17" cy="8.5" r="6"/><path d="M6 24Q6 16 13 16H21Q28 16 28 24Q28 27 25.500 27H8.500Q6 27 6 24Z"/></g></svg>
<span class="t" style="left:23.20px;top:535.021px;font-size:7.53px;color:#e6e9ed;transform:scaleX(0.8129);text-shadow:0 0 .3px #e6e9ed;">AQA A10pq Client</span>
<svg class="a" style="left:12.80px;top:556.00px;" width="5.30" height="6.80" viewBox="0 0 20 26"><path d="M2.5 0H12V6Q12 8 14 8H20V23.5Q20 26 17.5 26H2.5Q0 26 0 23.5V2.5Q0 0 2.500 0ZM14 0L20 6H14.800Q14 6 14 5.200ZM4.500 12.200V14H15.500V12.200ZM4.500 16.200V18H15.500V16.200ZM4.500 20.200V22H15.500V20.200Z" fill-rule="evenodd" fill="#e8eaee"/></svg>
<span class="t" style="left:20.00px;top:556.021px;font-size:7.53px;color:#e6e9ed;transform:scaleX(0.7894);text-shadow:0 0 .3px #e6e9ed;">INV399 QA Test1</span>
<svg class="a" style="left:12.80px;top:577.00px;" width="5.30" height="6.80" viewBox="0 0 20 26"><path d="M2.5 0H12V6Q12 8 14 8H20V23.5Q20 26 17.5 26H2.5Q0 26 0 23.5V2.5Q0 0 2.500 0ZM14 0L20 6H14.800Q14 6 14 5.200ZM4.500 12.200V14H15.500V12.200ZM4.500 16.200V18H15.500V16.200ZM4.500 20.200V22H15.500V20.200Z" fill-rule="evenodd" fill="#e8eaee"/></svg>
<span class="t" style="left:20.00px;top:577.021px;font-size:7.53px;color:#e6e9ed;transform:scaleX(0.7904);text-shadow:0 0 .3px #e6e9ed;">INV402 AQA D3yc Client</span>
</nav></aside>
</body></html>
